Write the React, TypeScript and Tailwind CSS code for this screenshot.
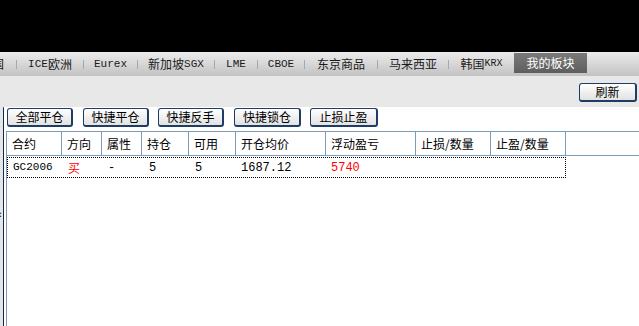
import React from "react";

const FONT = '"Noto Sans CJK SC", "Liberation Sans", sans-serif';
const MONO = '"Liberation Mono", "Noto Sans CJK SC", monospace';

function Sep() {
  return <div className="w-px h-[9px] bg-[#a8a8a8] shrink-0" />;
}

function Tab({ w, children }: { w: number; children: React.ReactNode }) {
  return (
    <div
      className="flex items-center justify-center shrink-0 text-[12px] leading-none text-[#1a1a1a] whitespace-nowrap"
      style={{ width: w }}
    >
      {children}
    </div>
  );
}

function Btn({ children, w, className = "" }: { children: React.ReactNode; w: number; className?: string }) {
  return (
    <div
      className={
        "h-[19px] flex items-center justify-center shrink-0 rounded-[3px] border border-[#1d3d66] border-b-2 border-r-2 bg-gradient-to-b from-white to-[#e2e2e2] text-[12px] leading-none text-black " +
        className
      }
      style={{ width: w }}
    >
      {children}
    </div>
  );
}

const cols = [
  { w: 55, label: "合约" },
  { w: 40, label: "方向" },
  { w: 40, label: "属性" },
  { w: 47, label: "持仓" },
  { w: 47, label: "可用" },
  { w: 90, label: "开仓均价" },
  { w: 90, label: "浮动盈亏" },
  { w: 75, label: "止损/数量" },
  { w: 75, label: "止盈/数量" },
];

export default function App() {
  return (
    <div className="w-[639px] h-[326px] overflow-hidden bg-white flex flex-col" style={{ fontFamily: FONT }}>
      <div className="h-[52px] bg-black shrink-0" />
      {/* tab bar */}
      <div className="h-[24px] shrink-0 flex items-start bg-gradient-to-b from-[#ececec] to-[#c2c2c2]">
        <div className="h-[24px] flex items-center">
          <div className="w-[16px] shrink-0 flex justify-end pr-[12px] text-[12px] leading-none text-[#1a1a1a] whitespace-nowrap">国</div>
          <Sep />
          <Tab w={66}><span style={{ fontFamily: MONO }} className="text-[11px]">ICE</span>欧洲</Tab>
          <Sep />
          <Tab w={53}><span style={{ fontFamily: MONO }} className="text-[11px]">Eurex</span></Tab>
          <Sep />
          <Tab w={76}>新加坡<span style={{ fontFamily: MONO }} className="text-[11px]">SGX</span></Tab>
          <Sep />
          <Tab w={42}><span style={{ fontFamily: MONO }} className="text-[11px]">LME</span></Tab>
          <Sep />
          <Tab w={46}><span style={{ fontFamily: MONO }} className="text-[11px]">CBOE</span></Tab>
          <Sep />
          <Tab w={72}>东京商品</Tab>
          <Sep />
          <Tab w={70}>马来西亚</Tab>
          <Sep />
          <Tab w={65}>韩国<span style={{ fontFamily: MONO }} className="text-[10px]">KRX</span></Tab>
        </div>
        <div className="mt-[1px] h-[20px] w-[73px] shrink-0 flex items-center justify-center bg-gradient-to-b from-[#7a7a7a] to-[#5e5e5e] text-white text-[12px] leading-none">
          我的板块
        </div>
      </div>
      {/* gray area */}
      <div className="h-[31px] shrink-0 bg-[#e8e8e8] flex justify-end items-start pt-[7px] pr-[2px]">
        <Btn w={58}>刷新</Btn>
      </div>
      {/* white area */}
      <div className="flex-1 flex min-h-0">
        <div className="w-[3px] shrink-0 bg-[#e6e6e6] flex flex-col pt-[103px]">
          <div className="text-[9px] leading-none text-black -ml-[4px] font-bold">{"<"}</div>
        </div>
        <div className="w-px shrink-0 bg-[#0d2b4d] rounded-t" />
        <div className="w-[2px] shrink-0 bg-white" />
        <div className="flex-1 flex flex-col min-w-0">
          <div className="h-[24px] flex items-start pl-px pt-[1px] shrink-0">
            <Btn w={66}>全部平仓</Btn>
            <Btn w={66} className="ml-[10px]">快捷平仓</Btn>
            <Btn w={66} className="ml-[9px]">快捷反手</Btn>
            <Btn w={67} className="ml-[10px]">快捷锁仓</Btn>
            <Btn w={68} className="ml-[9px]">止损止盈</Btn>
          </div>
          <div className="flex-1 border-l border-[#7d9bb9] flex flex-col">
            <div className="h-[25px] border-t border-b border-[#7d9bb9] flex shrink-0 text-[12px] leading-none text-black">
              {cols.map((c) => (
                <div
                  key={c.label}
                  className="h-full border-r border-[#7d9bb9] flex items-center pl-[5px] shrink-0"
                  style={{ width: c.w }}
                >
                  {c.label}
                </div>
              ))}
              <div className="flex-1" />
            </div>
            <div className="mt-px w-[559px] h-[21px] border border-dotted border-black flex items-center text-[12px] leading-none text-black">
              <div className="w-[55px] pl-[5px] text-[11px]" style={{ fontFamily: MONO }}>GC2006</div>
              <div className="w-[40px] pl-[5px] text-[#ff0000]">买</div>
              <div className="w-[40px] pl-[5px]" style={{ fontFamily: MONO }}>-</div>
              <div className="w-[47px] pl-[6px]" style={{ fontFamily: MONO }}>5</div>
              <div className="w-[47px] pl-[5px]" style={{ fontFamily: MONO }}>5</div>
              <div className="w-[90px] pl-[4px]" style={{ fontFamily: MONO }}>1687.12</div>
              <div className="w-[90px] pl-[4px] text-[#ff0000]" style={{ fontFamily: MONO }}>5740</div>
            </div>
          </div>
        </div>
      </div>
    </div>
  );
}
